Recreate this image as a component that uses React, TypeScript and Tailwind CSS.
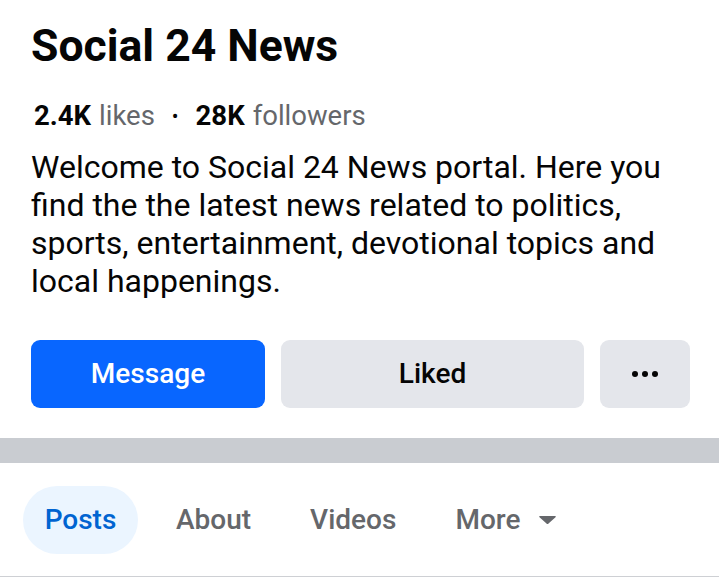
import React from "react";

export default function App() {
  return (
    <div className="w-[719px] h-[581px] bg-white overflow-hidden" style={{ fontFamily: "Roboto, 'Liberation Sans', sans-serif" }}>
      <div className="pl-[31px] pr-[20px]">
        <h1 className="pt-[20px] text-[44.5px] leading-[52px] font-bold text-[#050505]">Social 24 News</h1>
        <div className="mt-[28px] flex items-center text-[27.5px] leading-[32px] pl-[3px]">
          <span className="font-bold text-[#050505]">2.4K</span>
          <span className="ml-[8px] text-[#65676b]">likes</span>
          <span className="mx-[17px] text-[#050505] text-[20px]">•</span>
          <span className="font-bold text-[#050505]">28K</span>
          <span className="ml-[8px] text-[#65676b]">followers</span>
        </div>
        <p className="mt-[16px] text-[32px] leading-[38px] text-[#050505]">
          Welcome to Social 24 News portal. Here you find the the latest news related to politics, sports, entertainment, devotional topics and local happenings.
        </p>
        <div className="mt-[40px] flex gap-[16px]">
          <button className="w-[234px] h-[68px] rounded-[9px] bg-[#0866ff] text-white text-[28px] font-medium">Message</button>
          <button className="w-[303px] h-[68px] rounded-[9px] bg-[#e4e6eb] text-[#050505] text-[28px] font-medium">Liked</button>
          <button className="w-[90px] h-[68px] rounded-[9px] bg-[#e4e6eb] flex items-center justify-center gap-[4px]">
            <span className="w-[6px] h-[6px] rounded-full bg-[#050505]"></span>
            <span className="w-[6px] h-[6px] rounded-full bg-[#050505]"></span>
            <span className="w-[6px] h-[6px] rounded-full bg-[#050505]"></span>
          </button>
        </div>
      </div>
      <div className="mt-[30px] h-[25px] bg-[#c9ccd1]"></div>
      <div className="h-[114px] border-b border-[#ced0d4] flex items-center pl-[23px]">
        <div className="h-[68px] w-[115px] rounded-full bg-[#ebf5ff] flex items-center justify-center text-[28px] font-medium text-[#0064d1]">Posts</div>
        <div className="ml-[38px] text-[28px] font-medium text-[#65676b]">About</div>
        <div className="ml-[59px] text-[28px] font-medium text-[#65676b]">Videos</div>
        <div className="ml-[59px] flex items-center text-[28px] font-medium text-[#65676b]">
          More
          <svg className="ml-[18px]" width="19" height="10" viewBox="0 0 19 10">
            <path d="M2 1 H17 Q18.5 1 17.5 2.2 L10.5 8.5 Q9.5 9.5 8.5 8.5 L1.5 2.2 Q0.5 1 2 1 Z" fill="#65676b" />
          </svg>
        </div>
      </div>
    </div>
  );
}
